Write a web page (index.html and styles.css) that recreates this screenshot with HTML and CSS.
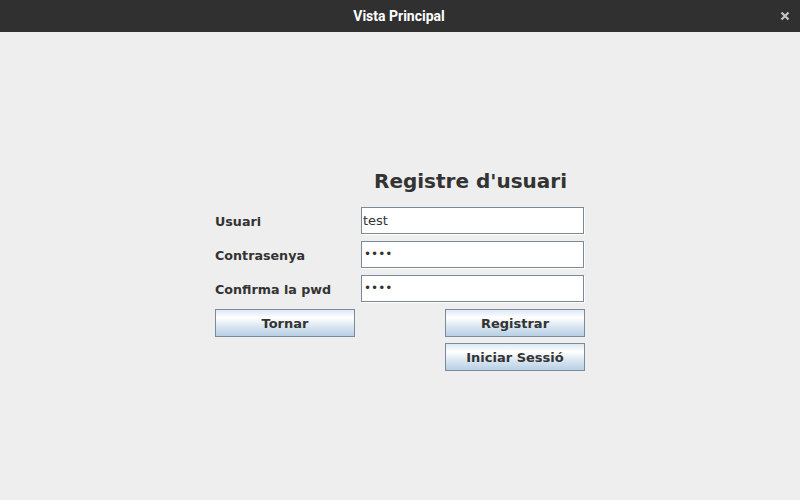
FILE: index.html
```html
<!DOCTYPE html>
<html>
<head>
<meta charset="utf-8">
<link rel="stylesheet" href="styles.css">
</head>
<body>
<div class="window">
  <div class="titlebar">
    <span class="title">Vista Principal</span>
    <svg class="close" width="10" height="10" viewBox="0 0 10 10"><path d="M1.5 1.5 L8.5 8.5 M8.5 1.5 L1.5 8.5" stroke="#c4c4c4" stroke-width="2.2" fill="none"/></svg>
  </div>
  <div class="content">
    <form class="form">
      <h1 class="heading">Registre d'usuari</h1>
      <label class="label">Usuari</label>
      <div class="field">test</div>
      <label class="label">Contrasenya</label>
      <div class="field pwd">••••</div>
      <label class="label">Confirma la pwd</label>
      <div class="field pwd">••••</div>
      <div class="btn">Tornar</div>
      <div class="btn right">Registrar</div>
      <div class="btn right col2">Iniciar Sessió</div>
    </form>
  </div>
</div>
</body>
</html>
```
FILE: styles.css
```css
html, body {
  margin: 0;
  padding: 0;
  width: 800px;
  height: 500px;
  overflow: hidden;
  background: #eeeeee;
}
.window {
  width: 800px;
  height: 500px;
  display: flex;
  flex-direction: column;
}
.titlebar {
  height: 32px;
  background: #303030;
  position: relative;
  display: flex;
  align-items: center;
  justify-content: center;
  flex-shrink: 0;
}
.title {
  font-family: Roboto, "Liberation Sans", sans-serif;
  font-weight: 700;
  font-size: 14px;
  letter-spacing: 0px;
  color: #ffffff;
  padding-right: 2px;
}
.close {
  position: absolute;
  right: 10px;
  top: 11px;
}
.content {
  flex: 1;
  background: #eeeeee;
  padding-top: 138px;
  padding-left: 215px;
}
.form {
  display: grid;
  grid-template-columns: 146px 224px;
  grid-template-rows: 31px;
  grid-auto-rows: 28px;
  row-gap: 6px;
  margin: 0;
  font-family: "DejaVu Sans", sans-serif;
  color: #333333;
}
.heading {
  grid-column: 2;
  margin: -1px 0 0 0;
  font-size: 20px;
  font-weight: 700;
  line-height: 24px;
  text-align: center;
  padding-right: 5px;
  color: #333333;
  align-self: start;
}
.label {
  font-size: 12.7px;
  font-weight: 700;
  align-self: center;
  line-height: 16px;
  padding-top: 1px;
}
.field {
  width: 223px;
  height: 27px;
  box-sizing: border-box;
  border: 1px solid #7a8a99;
  box-shadow: 1px 1px 0 #ffffff;
  background: #ffffff;
  font-size: 13px;
  line-height: 25px;
  padding-left: 1px;
  color: #333333;
}
.field.pwd {
  padding-left: 2px;
  letter-spacing: 0px;
  font-size: 12px;
}
.btn {
  width: 140px;
  height: 28px;
  box-sizing: border-box;
  border: 1px solid #7a8a99;
  background: linear-gradient(to bottom, #dde8f3 0%, #ffffff 30%, #dde8f3 60%, #b8cfe5 100%);
  font-size: 13px;
  font-weight: 700;
  line-height: 26px;
  padding-top: 1px;
  text-align: center;
  color: #333333;
}
.btn.right {
  justify-self: start;
  margin-left: 84px;
}
.btn.col2 {
  grid-column: 2;
}
```
